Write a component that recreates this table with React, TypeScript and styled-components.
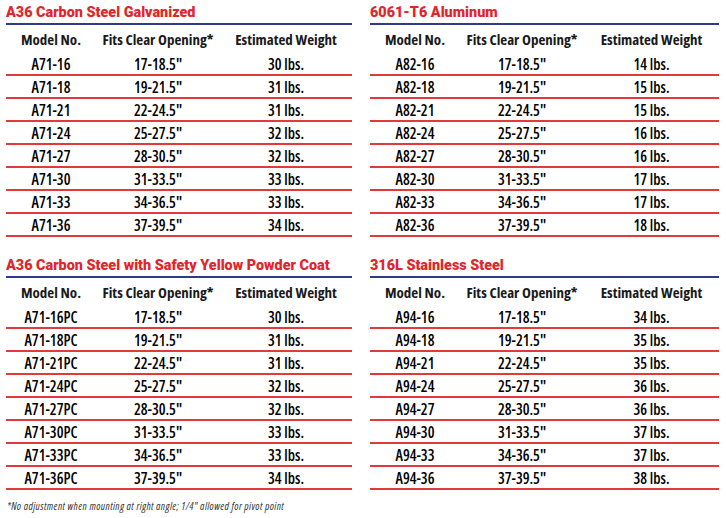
import React from "react";
import styled, { createGlobalStyle } from "styled-components";

const GlobalStyle = createGlobalStyle`
  html, body { margin: 0; padding: 0; background: #ffffff; }
  body { width: 726px; height: 518px; overflow: hidden; }
`;

type Row = [string, string, string];
type Section = { title: string; rows: Row[] };

const openings = ["17-18.5\"", "19-21.5\"", "22-24.5\"", "25-27.5\"", "28-30.5\"", "31-33.5\"", "34-36.5\"", "37-39.5\""];
const sizes = ["16", "18", "21", "24", "27", "30", "33", "36"];

const make = (prefix: string, suffix: string, weights: number[]): Row[] =>
  sizes.map((s, i) => [`${prefix}-${s}${suffix}`, openings[i], `${weights[i]} lbs.`]);

const sections: Section[] = [
  { title: "A36 Carbon Steel Galvanized", rows: make("A71", "", [30, 31, 31, 32, 32, 33, 33, 34]) },
  { title: "6061-T6 Aluminum", rows: make("A82", "", [14, 15, 15, 16, 16, 17, 17, 18]) },
  { title: "A36 Carbon Steel with Safety Yellow Powder Coat", rows: make("A71", "PC", [30, 31, 31, 32, 32, 33, 33, 34]) },
  { title: "316L Stainless Steel", rows: make("A94", "", [34, 35, 35, 36, 36, 37, 37, 38]) },
];

const Page = styled.div`
  display: grid;
  grid-template-columns: 346px 349px;
  column-gap: 18px;
  row-gap: 20px;
  padding: 4px 0 0 6px;
  font-family: "Open Sans", "DejaVu Sans Condensed", sans-serif;
  font-stretch: 75%;
  color: #111111;
`;

const Block = styled.section`
  display: flex;
  flex-direction: column;
`;

const Title = styled.h2`
  margin: 0;
  font-family: "Roboto", "Liberation Sans", sans-serif;
  font-stretch: normal;
  font-weight: 900;
  font-size: 14.4px;
  line-height: 18px;
  color: #e0262b;
  white-space: nowrap;
  border-bottom: 2px solid #2c3b8e;
  padding-bottom: 1px;
`;

const Grid = styled.div`
  display: grid;
  grid-template-columns: 90px 124px 1fr;
  align-items: center;
  text-align: center;
`;

const HeadRow = styled(Grid)`
  height: 28px;
  padding-bottom: 1px;
  box-sizing: border-box;
  font-weight: 700;
  font-size: 15px;
  color: #1a1a1a;
`;

const DataRow = styled(Grid)`
  height: 23px;
  box-sizing: border-box;
  border-bottom: 2px solid #e2393b;
  font-weight: 650;
  font-size: 15.2px;
  color: #000000;
`;

const Cell = styled.div`
  white-space: nowrap;
`;

const Footnote = styled.p`
  grid-column: 1 / -1;
  margin: -10px 0 0 1px;
  font-style: italic;
  font-size: 10.5px;
  letter-spacing: 0.4px;
  line-height: 12px;
  color: #333333;
`;

const TableBlock = ({ s }: { s: Section }) => (
  <Block>
    <Title>{s.title}</Title>
    <HeadRow>
      <Cell>Model No.</Cell>
      <Cell>Fits Clear Opening*</Cell>
      <Cell>Estimated Weight</Cell>
    </HeadRow>
    {s.rows.map((r) => (
      <DataRow key={r[0]}>
        <Cell>{r[0]}</Cell>
        <Cell>{r[1]}</Cell>
        <Cell>{r[2]}</Cell>
      </DataRow>
    ))}
  </Block>
);

export default function App() {
  return (
    <>
      <GlobalStyle />
      <Page>
        {sections.map((s) => (
          <TableBlock key={s.title} s={s} />
        ))}
        <Footnote>*No adjustment when mounting at right angle; 1/4" allowed for pivot point</Footnote>
      </Page>
    </>
  );
}
